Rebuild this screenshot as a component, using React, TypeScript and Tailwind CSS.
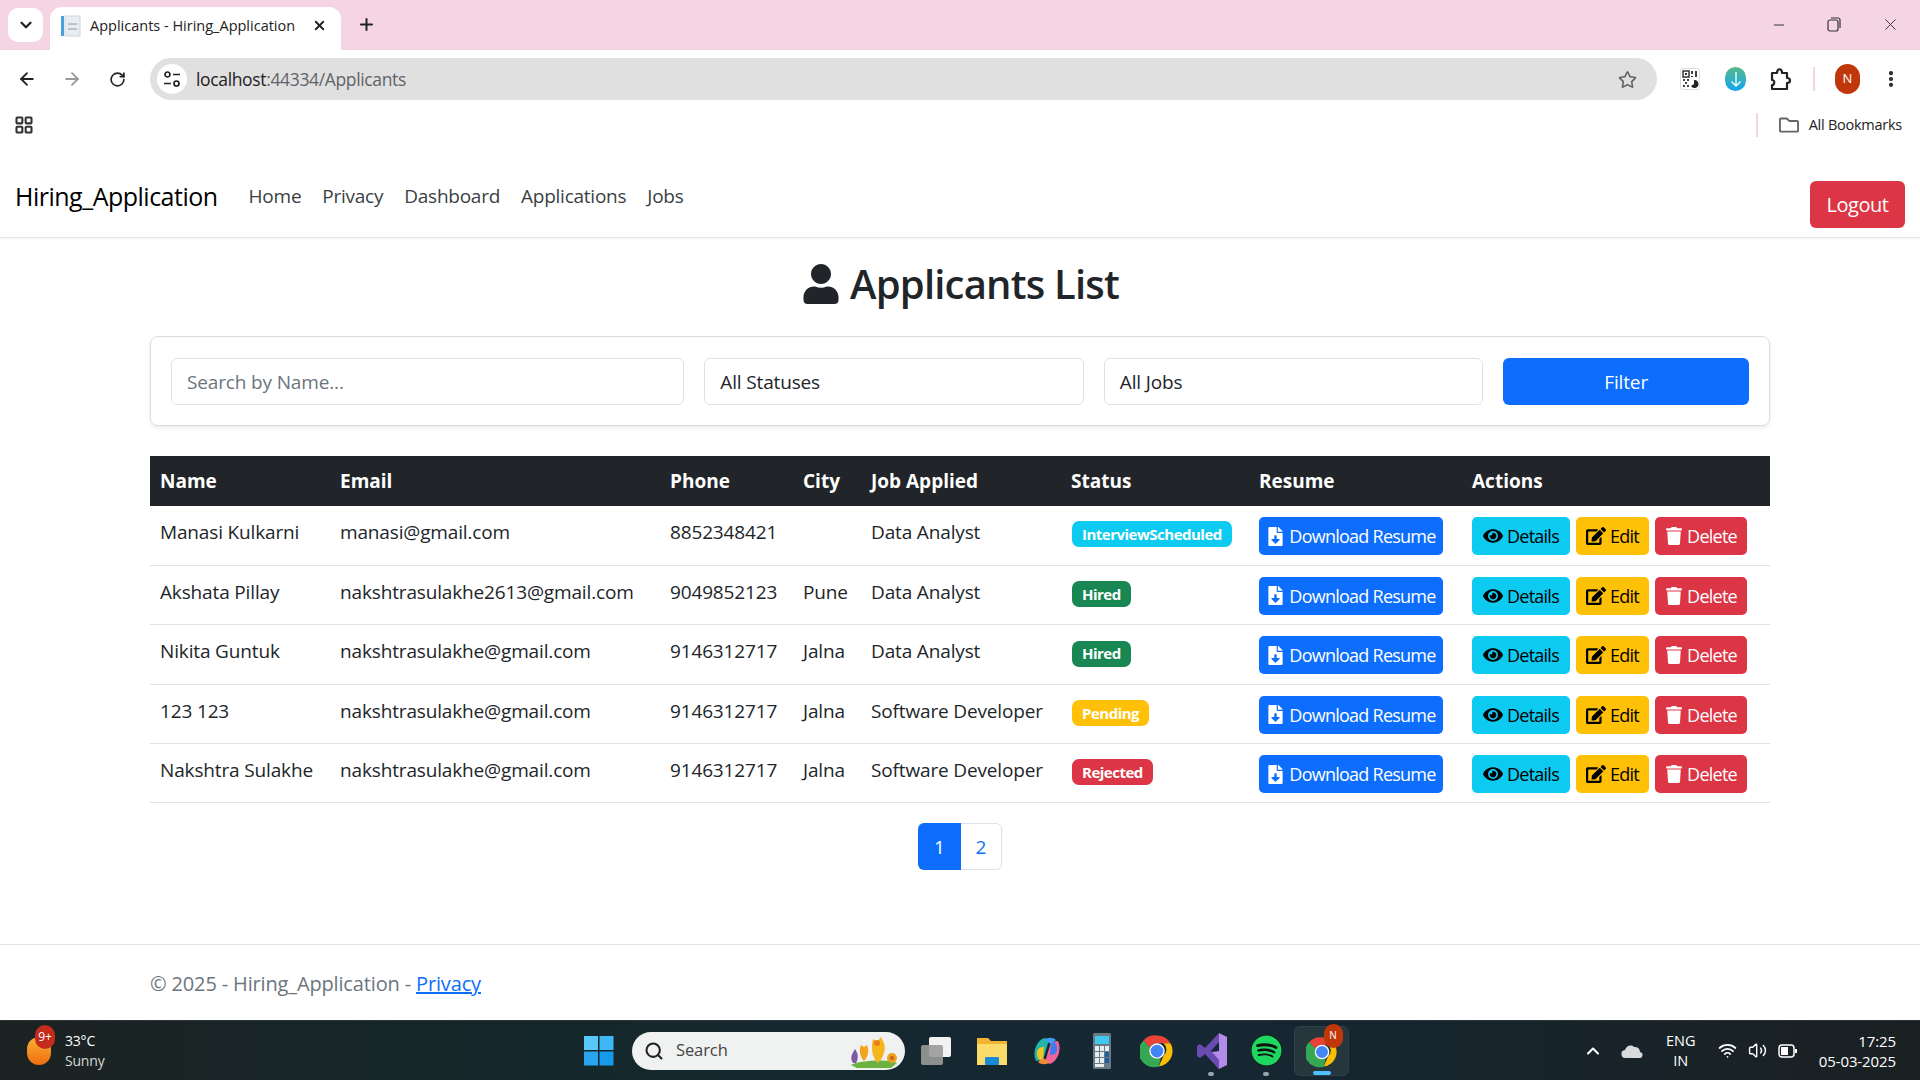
import React from "react";
import { FaEye, FaEdit, FaTrash, FaFileDownload, FaUser, FaSpotify, FaRegStar, FaRegFolder } from "react-icons/fa";
import { LuArrowLeft, LuArrowRight, LuRotateCw, LuX, LuPlus, LuChevronDown, LuMinus, LuEllipsisVertical, LuSearch, LuChevronUp, LuWifi, LuVolume2, LuLayoutGrid } from "react-icons/lu";

const font = "font-['Open_Sans',sans-serif]";

const rows = [
  { name: "Manasi Kulkarni", email: "manasi@gmail.com", phone: "8852348421", city: "", job: "Data Analyst", status: "InterviewScheduled", badge: "bg-[#0dcaf0]" },
  { name: "Akshata Pillay", email: "nakshtrasulakhe2613@gmail.com", phone: "9049852123", city: "Pune", job: "Data Analyst", status: "Hired", badge: "bg-[#198754]" },
  { name: "Nikita Guntuk", email: "nakshtrasulakhe@gmail.com", phone: "9146312717", city: "Jalna", job: "Data Analyst", status: "Hired", badge: "bg-[#198754]" },
  { name: "123 123", email: "nakshtrasulakhe@gmail.com", phone: "9146312717", city: "Jalna", job: "Software Developer", status: "Pending", badge: "bg-[#ffc107]" },
  { name: "Nakshtra Sulakhe", email: "nakshtrasulakhe@gmail.com", phone: "9146312717", city: "Jalna", job: "Software Developer", status: "Rejected", badge: "bg-[#dc3545]" },
];

function ChromeLogo({ size = 32 }: { size?: number }) {
  return (
    <svg width={size} height={size} viewBox="0 0 48 48">
      <path d="M24 2a22 22 0 0 1 19 11H24a11 11 0 0 0-10 6L5 9A22 22 0 0 1 24 2z" fill="#ea4335" />
      <path d="M43 13a22 22 0 0 1-16.500 32.900L33.500 30A11 11 0 0 0 33 13z" fill="#fbbc04" />
      <path d="M5 9l9.500 10.500A11 11 0 0 0 24 35c2 0 4-.5 5.500-1.500L26.500 46A22 22 0 0 1 5 9z" fill="#34a853" />
      <circle cx="24" cy="24" r="10" fill="#4285f4" stroke="#fff" strokeWidth="2" />
    </svg>
  );
}

function TaskIcon({ children, dot, active }: { children: React.ReactNode; dot?: boolean; active?: boolean }) {
  return (
    <div className={`relative w-[55px] h-[50px] flex items-center justify-center rounded-md ${active ? "bg-[#25363c] border border-[#2e4148]" : ""}`}>
      {children}
      {dot && <span className="absolute bottom-0 left-[24px] w-[6px] h-[4px] rounded-full bg-[#9aa3a8]" />}
      {active && <span className="absolute bottom-0 left-[18px] w-[18px] h-[4px] rounded-full bg-[#4cc2ff]" />}
    </div>
  );
}

function Action({ cls, w, icon, label }: { cls: string; w: string; icon: React.ReactNode; label: string }) {
  return (
    <button className={`inline-flex h-[38px] items-center justify-center gap-[4px] rounded-[5px] text-[18px] tracking-[-0.75px] leading-none ${cls} ${w}`}>
      {icon}
      {label}
    </button>
  );
}

export default function App() {
  return (
    <div className={`${font} w-[1920px] h-[1080px] flex flex-col overflow-hidden bg-white text-[#212529]`}>
      {/* Tab strip */}
      <div className="h-[50px] shrink-0 bg-[#f5d5e4] flex items-end relative">
        <div className="w-[35px] h-[34px] ml-[8px] mb-[8px] bg-white rounded-[10px] flex items-center justify-center">
          <LuChevronDown size={18} strokeWidth={3} className="text-[#222]" />
        </div>
        <div className="w-[291px] h-[43px] ml-[7px] bg-white rounded-t-[12px] flex items-center pl-[11px] pr-[14px] pb-[6px]">
          <svg width="20" height="22" viewBox="0 0 20 22" className="shrink-0">
            <rect x="0" y="1" width="3" height="20" fill="#4a9fdc" />
            <rect x="4" y="1" width="15" height="20" fill="#e8edf2" stroke="#cfd6dc" />
            <rect x="7" y="8" width="9" height="2" fill="#b8c2ca" />
            <rect x="7" y="13" width="9" height="2" fill="#b8c2ca" />
          </svg>
          <span className="ml-[9px] text-[14.500px] tracking-[0px] text-[#222] whitespace-nowrap flex-1">Applicants - Hiring_Application</span>
          <LuX size={15} strokeWidth={3} className="text-[#222]" />
        </div>
        <LuPlus size={19} strokeWidth={2.500} className="ml-[16px] mb-[16px] text-[#222]" />
        <div className="ml-auto flex items-center pr-[20px] mb-[16px] text-[#333]">
          <LuMinus size={16} strokeWidth={1.500} />
          <svg width="14" height="15" viewBox="0 0 14 15" fill="none" stroke="#333" strokeWidth="1.200" className="ml-[40px]"><rect x="1" y="3" width="10" height="11" rx="2" /><path d="M4 1h7a2 2 0 0 1 2 2v8" /></svg>
          <LuX size={19} strokeWidth={1.200} className="ml-[40px]" />
        </div>
      </div>

      {/* Toolbar */}
      <div className="h-[58px] shrink-0 bg-white rounded-t-[10px] flex items-center text-[#333]">
        <LuArrowLeft size={20} strokeWidth={2.200} className="ml-[17px] text-[#222]" />
        <LuArrowRight size={20} strokeWidth={2.200} className="ml-[25px] text-[#9a9a9a]" />
        <LuRotateCw size={17} strokeWidth={2.400} className="ml-[27px] text-[#222]" />
        <div className="ml-[24px] w-[1507px] h-[42px] rounded-full bg-[#e0e0e0] flex items-center pl-[7px] pr-[20px]">
          <div className="w-[30px] h-[30px] rounded-full bg-white flex items-center justify-center">
            <svg width="18" height="18" viewBox="0 0 18 18" fill="none" stroke="#222" strokeWidth="1.700">
              <circle cx="4.500" cy="4.500" r="2.500" /><path d="M10 4.500h7M1 13.500h7" /><circle cx="13.500" cy="13.500" r="2.500" />
            </svg>
          </div>
          <span className="ml-[9px] text-[17.500px] tracking-[-0.35px] text-[#222]">localhost<span className="text-[#5f6368]">:44334/Applicants</span></span>
          <FaRegStar size={19} className="ml-auto text-[#5f6368]" />
        </div>
        <svg width="20" height="22" viewBox="0 0 20 22" className="ml-[23px]">
          <rect x="0.500" y="0.500" width="19" height="21" rx="2" fill="#fff" stroke="#ddd" />
          <rect x="3" y="3" width="6" height="6" fill="none" stroke="#333" strokeWidth="1.500" /><rect x="5" y="5" width="2" height="2" fill="#333" />
          <path d="M11 3h2v3h-2zM15 3h2v6h-2zM11 8h2v1h-2zM3 11h2v2H3zM7 11h2v2H7zM5 14h2v2H5zM3 17h2v2H3zM7 17h2v2H7z" fill="#444" />
          <path d="M14 12a4 4 0 1 1-3 6l3-2z" fill="#222" />
        </svg>
        <div className="ml-[25px] w-[21px] h-[24px] rounded-full bg-[linear-gradient(#58b98a,#10a5ef)] flex items-center justify-center text-white">
          <svg width="12" height="16" viewBox="0 0 12 16" fill="none" stroke="#fff" strokeWidth="1.300"><path d="M6 1v14M1.500 10.500 6 15l4.500-4.500" /></svg>
        </div>
        <svg width="22" height="24" viewBox="0 0 22 24" fill="none" stroke="#222" strokeWidth="2.200" strokeLinejoin="round" className="ml-[24px]">
          <path d="M2 6h5c0-5 5-5 5 0h5v5c4 0 4 5 0 5v6H2v-4c3 0 3-5 0-5z" />
        </svg>
        <span className="ml-[21px] w-[2px] h-[24px] bg-[#f5d5e4]" />
        <div className="ml-[20px] w-[25px] h-[30px] rounded-full bg-[#c1370c] text-white text-[13px] flex items-center justify-center">N</div>
        <LuEllipsisVertical size={20} strokeWidth={3} className="ml-[21px] text-[#222]" />
      </div>

      {/* Bookmarks */}
      <div className="h-[32px] shrink-0 bg-white flex items-center pt-[2px]">
        <LuLayoutGrid size={20} strokeWidth={2.500} className="ml-[14px] text-[#333]" />
        <span className="ml-auto w-[2px] h-[24px] bg-[#f5d5e4]" />
        <FaRegFolder size={20} className="ml-[21px] text-[#666]" />
        <span className="ml-[10px] mr-[18px] text-[14.500px] tracking-[-0.25px] text-[#222]">All Bookmarks</span>
      </div>

      {/* Navbar */}
      <nav className="h-[98px] shrink-0 border-b border-[#e3e6ea] shadow-[0_1px_3px_rgba(0,0,0,0.05)] flex items-start pl-[15px] pr-[15px] relative">
        <span className="mt-[37px] text-[25px] leading-[38px] tracking-[-0.5px] text-black">Hiring_Application</span>
        <div className="mt-[39px] ml-[31px] flex gap-[21px] text-[19px] leading-[34px] tracking-[-0.25px] text-[#3a3f44]">
          <span>Home</span><span>Privacy</span><span>Dashboard</span><span>Applications</span><span>Jobs</span>
        </div>
        <button className="ml-auto mt-[41px] w-[95px] h-[47px] rounded-[6px] bg-[#dc3545] text-white text-[20px] tracking-[-0.5px]">Logout</button>
      </nav>

      {/* Main */}
      <main className="flex-1 px-[150px]">
        <h1 className="mt-[18px] h-[56px] flex items-center justify-center gap-[9px] text-[40px] font-semibold tracking-[-0.8px]">
          <FaUser size={40} /> Applicants List
        </h1>
        <form className="mt-[24px] h-[90px] border border-[#d9dcdf] rounded-[8px] shadow-[0_2px_4px_rgba(0,0,0,0.08)] flex items-center gap-[20px] px-[20px]">
          <div className="w-[514px] h-[47px] border border-[#dee2e6] rounded-[6px] flex items-center pl-[15px] pt-[2px] text-[19px] tracking-[-0.15px] text-[#6c757d]">Search by Name...</div>
          <div className="w-[380px] h-[47px] border border-[#dee2e6] rounded-[6px] flex items-center pl-[15px] pt-[2px] text-[19px] tracking-[-0.15px]">All Statuses</div>
          <div className="w-[380px] h-[47px] border border-[#dee2e6] rounded-[6px] flex items-center pl-[15px] pt-[2px] text-[19px] tracking-[-0.15px]">All Jobs</div>
          <button type="button" className="w-[246px] h-[47px] rounded-[6px] bg-[#0d6efd] text-white pt-[2px] text-[19px] tracking-[-0.15px]">Filter</button>
        </form>

        <table className="mt-[30px] w-[1620px] table-fixed border-collapse text-[19px] tracking-[-0.15px]">
          <colgroup>
            <col className="w-[180px]" /><col className="w-[330px]" /><col className="w-[133px]" /><col className="w-[68px]" />
            <col className="w-[200px]" /><col className="w-[188px]" /><col className="w-[213px]" /><col className="w-[308px]" />
          </colgroup>
          <thead>
            <tr className="h-[50px] bg-[#212529] text-white text-left font-bold">
              {["Name", "Email", "Phone", "City", "Job Applied", "Status", "Resume", "Actions"].map((h) => (
                <th key={h} className="pl-[10px] font-bold tracking-[0px]">{h}</th>
              ))}
            </tr>
          </thead>
          <tbody>
            {rows.map((r) => (
              <tr key={r.name} className="h-[59.400px] border-b border-[#dee2e6]">
                <td className="pl-[10px] pt-[12px] align-top whitespace-nowrap">{r.name}</td>
                <td className="pl-[10px] pt-[12px] align-top whitespace-nowrap">{r.email}</td>
                <td className="pl-[10px] pt-[12px] align-top whitespace-nowrap">{r.phone}</td>
                <td className="pl-[10px] pt-[12px] align-top whitespace-nowrap">{r.city}</td>
                <td className="pl-[10px] pt-[12px] align-top whitespace-nowrap">{r.job}</td>
                <td className="pl-[11px] pt-[13px] align-top">
                  <span className={`inline-flex h-[26px] items-center px-[10px] rounded-[7px] text-white text-[15px] font-bold tracking-[-0.5px] ${r.badge}`}>{r.status}</span>
                </td>
                <td className="pl-[10px] pt-[11px] align-top">
                  <Action cls="bg-[#0d6efd] text-white" w="w-[184px]" icon={<FaFileDownload size={19} />} label="Download Resume" />
                </td>
                <td className="pl-[10px] pt-[11px] align-top">
                  <div className="flex gap-[6px]">
                    <Action cls="bg-[#0dcaf0] text-black" w="w-[98px]" icon={<FaEye size={20} />} label="Details" />
                    <Action cls="bg-[#ffc107] text-black" w="w-[73px]" icon={<FaEdit size={20} />} label="Edit" />
                    <Action cls="bg-[#dc3545] text-white" w="w-[92px]" icon={<FaTrash size={18} />} label="Delete" />
                  </div>
                </td>
              </tr>
            ))}
          </tbody>
        </table>

        <div className="mt-[20px] flex justify-center text-[19px]">
          <span className="w-[43px] h-[47px] bg-[#0d6efd] text-white rounded-l-[6px] flex items-center justify-center">1</span>
          <span className="w-[41px] h-[47px] border border-[#dee2e6] border-l-0 text-[#0d6efd] rounded-r-[6px] flex items-center justify-center">2</span>
        </div>
      </main>

      {/* Footer */}
      <footer className="h-[76px] shrink-0 border-t border-[#dee2e6] pl-[150px] pt-[26px] text-[20px] leading-[26px] tracking-[-0.15px] text-[#6c757d]">
        © 2025 - Hiring_Application - <span className="text-[#0d6efd] underline">Privacy</span>
      </footer>

      {/* Taskbar */}
      <div className="h-[60px] shrink-0 bg-[linear-gradient(90deg,#1c2222,#14282c_30%,#152834_60%,#1a2022)] border-t border-[#2b3336] flex items-center relative text-white">
        <div className="w-[600px] flex items-center pl-[27px] shrink-0">
          <div className="relative w-[24px] h-[28px] rounded-full bg-[linear-gradient(#f9b233,#ef6c11)]">
            <span className="absolute -top-[12px] left-[8px] w-[20px] h-[24px] rounded-full bg-[#c42b1c] text-[12px] flex items-center justify-center">9+</span>
          </div>
          <div className="ml-[14px] text-[14px] leading-[20px] tracking-[-0.2px]">
            <div>33°C</div>
            <div className="text-[#d5d8da]">Sunny</div>
          </div>
        </div>
        <svg width="30" height="30" viewBox="0 0 30 30" className="-ml-[16px]">
          <rect x="0" y="0" width="14" height="14" fill="#58c8f8" /><rect x="15.500" y="0" width="14" height="14" fill="#3fb6f6" />
          <rect x="0" y="15.500" width="14" height="14" fill="#2ba4ee" /><rect x="15.500" y="15.500" width="14" height="14" fill="#159bec" />
        </svg>
        <div className="ml-[18px] w-[273px] h-[38px] rounded-full bg-[#f0f2f2] flex items-center pl-[12px] relative text-[#444]">
          <LuSearch size={20} strokeWidth={2.500} className="text-[#222]" />
          <span className="ml-[12px] text-[16.500px] tracking-[-0.1px]">Search</span>
          <svg width="56" height="36" viewBox="0 0 56 36" className="absolute right-[2px] top-[1px]">
            <path d="M4 32c8-5 40-6 46-2l-6 5H10z" fill="#6cb23e" />
            <path d="M6 30c-4-6 0-10 2-14 3 4 4 9 1 14z" fill="#7d5aa6" />
            <path d="M17 28c-6-7-4-14-3-16l3 2 3-2c2 4 2 11-3 16z" fill="#f3a41f" />
            <path d="M31 30c-8-8-6-20-5-24l4 3 4-5 3 6c2 6 0 14-6 20z" fill="#f5b51d" />
            <circle cx="30" cy="10" r="3" fill="#e8801a" />
            <circle cx="45" cy="25" r="5" fill="#f0a020" /><circle cx="45" cy="25" r="2" fill="#c8601a" />
          </svg>
        </div>
        <div className="ml-[4px] flex items-center">
          <TaskIcon>
            <div className="relative w-[32px] h-[28px]">
              <span className="absolute left-[8px] top-0 w-[22px] h-[20px] rounded-[2px] bg-[#f2f2f2]" />
              <span className="absolute left-0 top-[8px] w-[22px] h-[20px] rounded-[2px] bg-[#9a9a9a] opacity-90" />
            </div>
          </TaskIcon>
          <TaskIcon>
            <svg width="32" height="30" viewBox="0 0 32 30"><path d="M1 2h11l3 3h16v24H1z" fill="#f1b434" /><path d="M1 8h30v21H1z" fill="#fbdc6a" /><rect x="9" y="21" width="14" height="8" rx="1" fill="#1a8ad4" /></svg>
          </TaskIcon>
          <TaskIcon>
            <svg width="30" height="30" viewBox="0 0 30 30">
              <path d="M4 25c-4-8 0-20 8-23l5 2-6 20z" fill="#25b5a8" /><path d="M5 17c0-5 4-6 7-6l-1 13c-3 2-6-2-6-7z" fill="#f7c41f" />
              <path d="M26 5c4 8 0 20-8 23l-5-2 6-20z" fill="#f0639a" /><path d="M25 13c0 5-4 6-7 6l1-13c3-2 6 2 6 7z" fill="#3f7bf0" />
              <path d="M12 4c3-3 9-3 12 0l-5 4z" fill="#3ba0f5" /><path d="M18 26c-3 3-9 3-12 0l5-4z" fill="#f5893a" />
            </svg>
          </TaskIcon>
          <TaskIcon>
            <svg width="24" height="36" viewBox="0 0 24 36">
              <rect x="3" y="0" width="18" height="36" rx="1.500" fill="#6a7a85" /><rect x="5" y="3" width="14" height="8" fill="#40c8ee" />
              {[13, 19, 25].map((y) => [5, 10, 15].map((x) => <rect key={`${x}${y}`} x={x} y={y} width="4" height="5" fill={x === 15 && y > 13 ? "#1f5f9e" : "#e8eef0"} />))}
              <rect x="5" y="31" width="9" height="3" fill="#e8eef0" />
            </svg>
          </TaskIcon>
          <TaskIcon><ChromeLogo size={34} /></TaskIcon>
          <TaskIcon dot>
            <svg width="30" height="36" viewBox="0 0 30 36">
              <path d="M22 0l8 4v28l-8 4L8 20l14-2z" fill="#b38be8" /><path d="M22 0 8 15 3 11 0 13v10l3 2 5-4 14 15 0-9-8-9 8-9z" fill="#6a4bb0" />
            </svg>
          </TaskIcon>
          <TaskIcon dot>
            <FaSpotify size={31} className="text-[#1ed760] bg-[#111] rounded-full" />
          </TaskIcon>
          <TaskIcon active>
            <div className="relative mt-[2px]">
              <ChromeLogo size={32} />
              <span className="absolute -top-[12px] -right-[5px] w-[19px] h-[24px] rounded-full bg-[#c1370c] text-[10px] flex items-center justify-center">N</span>
            </div>
          </TaskIcon>
        </div>
        <div className="ml-auto flex items-center pr-[24px]">
          <LuChevronUp size={20} strokeWidth={2.500} />
          <svg width="22" height="16" viewBox="0 0 22 16" className="ml-[18px]"><path d="M5 15a4 4 0 0 1-1-8c1-4 6-6 9-3a5 5 0 0 1 6 5 3 3 0 0 1-1 6z" fill="#d8dadb" /></svg>
          <div className="ml-[22px] w-[32px] text-center text-[14.500px] leading-[20px]">ENG<br />IN</div>
          <LuWifi size={19} strokeWidth={2.200} className="ml-[21px]" />
          <LuVolume2 size={19} strokeWidth={1.800} className="ml-[11px]" />
          <svg width="20" height="14" viewBox="0 0 20 14" fill="none" className="ml-[11px]"><rect x="1" y="1" width="15" height="12" rx="3" stroke="#fff" strokeWidth="1.500" /><rect x="3" y="3" width="7" height="8" fill="#fff" /><rect x="17" y="5" width="2" height="4" fill="#fff" /></svg>
          <div className="ml-[21px] text-right text-[15px] leading-[20px] tracking-[-0.1px]">
            <div>17:25</div>
            <div>05-03-2025</div>
          </div>
        </div>
      </div>
    </div>
  );
}
